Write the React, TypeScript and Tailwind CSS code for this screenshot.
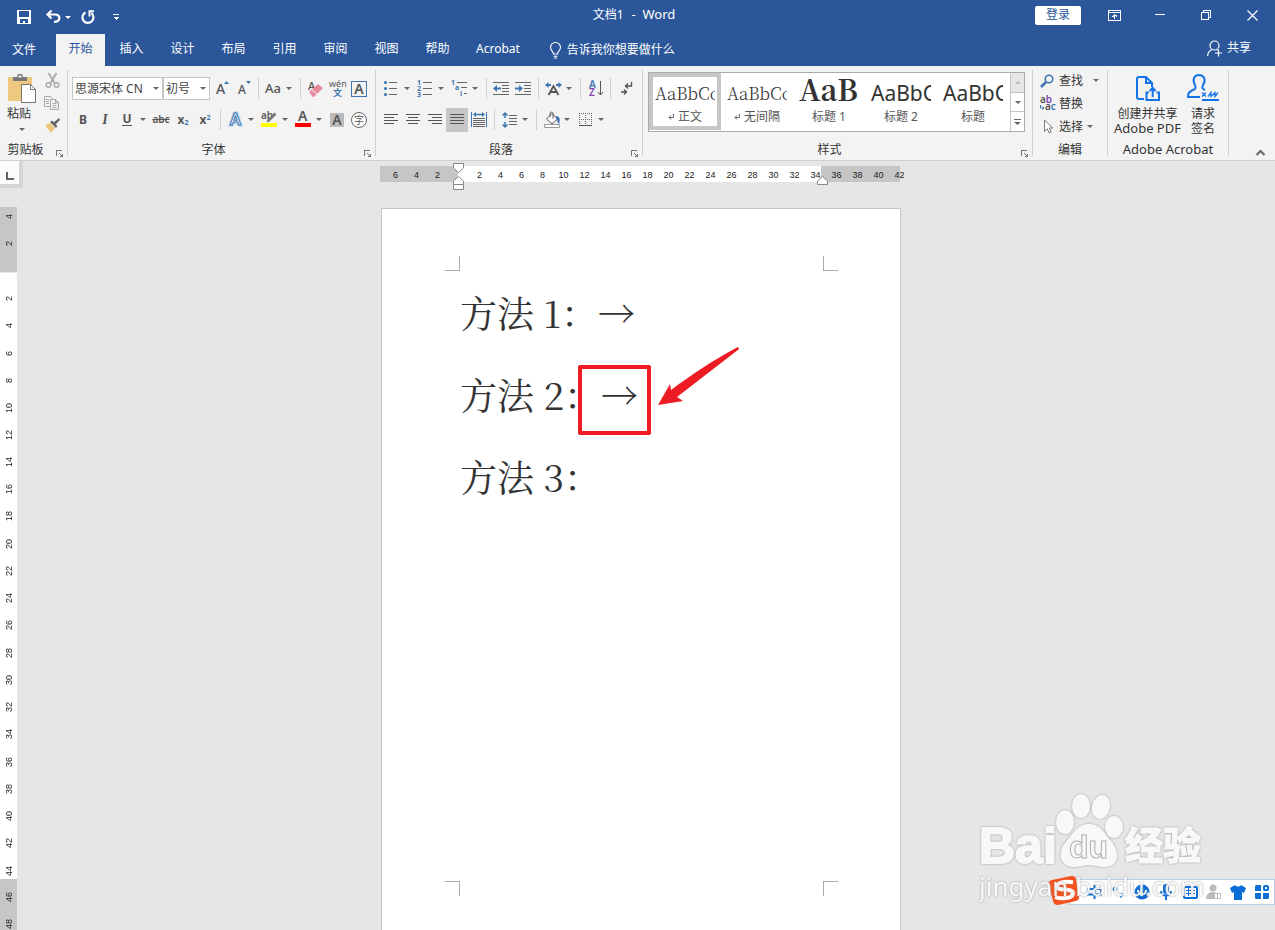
import type { ReactNode } from 'react';

const TABS = ['开始', '插入', '设计', '布局', '引用', '审阅', '视图', '帮助'];

const SERIF = "font-['Noto_Serif_CJK_SC','Liberation_Serif','Noto_Sans_CJK_SC',serif]";

const STYLES = [
  { sample: 'AaBbCc', name: '正文', mark: true, look: `${SERIF} items-center text-[17px] font-light leading-7 text-[#333]` },
  { sample: 'AaBbCc', name: '无间隔', mark: true, look: `${SERIF} items-center text-[17px] font-light leading-7 text-[#333]` },
  { sample: 'AaB', name: '标题 1', mark: false, look: `${SERIF} items-start text-[29px] font-bold leading-6 text-[#333]` },
  { sample: 'AaBbC', name: '标题 2', mark: false, look: 'items-center text-[21px] leading-7 text-[#333]' },
  { sample: 'AaBbC', name: '标题', mark: false, look: 'items-center text-[21px] leading-7 text-[#333]' },
];

const evens = (from: number, to: number) =>
  Array.from({ length: Math.abs(to - from) / 2 + 1 }, (_, i) => from + (to > from ? 2 : -2) * i);

interface IconProps {
  w?: number;
  h?: number;
  crisp?: boolean;
  children: ReactNode;
}

function Icon({ w = 16, h = 16, crisp, children }: IconProps) {
  return (
    <svg
      width={w}
      height={h}
      viewBox={`0 0 ${w} ${h}`}
      fill="none"
      className="shrink-0 overflow-visible"
      shapeRendering={crisp ? 'crispEdges' : undefined}
      aria-hidden="true"
    >
      {children}
    </svg>
  );
}

function Caret({ color = '#666' }: { color?: string }) {
  return (
    <Icon w={6} h={3}>
      <path d="M0 0h6L3 3z" fill={color} />
    </Icon>
  );
}

interface ToolProps {
  label: string;
  split?: boolean;
  active?: boolean;
  children: ReactNode;
}

// One ribbon button; split buttons carry a drop-down caret on the right
function Tool({ label, split, active, children }: ToolProps) {
  return (
    <button
      type="button"
      aria-label={label}
      className={`flex h-6 shrink-0 items-center ${split ? 'w-[34px]' : 'w-[22px]'} ${active ? 'bg-[#c6c6c6]' : ''}`}
    >
      <span className="flex w-[22px] shrink-0 items-center justify-center">{children}</span>
      {split && (
        <span className="flex w-2.5 justify-center">
          <Caret />
        </span>
      )}
    </button>
  );
}

function Divider() {
  return (
    <span className="flex w-2 shrink-0 justify-center">
      <span className="h-[21px] w-px bg-[#d0d0d0]" />
    </span>
  );
}

interface GroupProps {
  title: string;
  width: string;
  launcher?: boolean;
  children: ReactNode;
}

function Group({ title, width, launcher, children }: GroupProps) {
  return (
    <section className={`flex flex-col ${width}`}>
      <div className="h-[74px]">{children}</div>
      <div className="flex h-5 items-center">
        <span className={`flex-1 text-center whitespace-nowrap ${title.startsWith('Adobe') ? 'text-[13px]' : ''}`}>{title}</span>
        {launcher && (
          <button type="button" aria-label={`${title}设置`} className="flex w-4 justify-center pt-1.5">
            <Icon w={7} h={7} crisp>
              <path d="M0.5 6V0.5H6" stroke="#777" />
              <path d="M3 3l3 3" stroke="#777" />
              <path d="M7 3v4H3z" fill="#777" />
            </Icon>
          </button>
        )}
      </div>
    </section>
  );
}

function GroupLine() {
  return <div className="my-1 w-px shrink-0 bg-[#d0d0d0]" />;
}

function Row({ children }: { children: ReactNode }) {
  return <div className="flex h-[31px] items-center">{children}</div>;
}

function Lines({ rows }: { rows: [number, number][] }) {
  return (
    <Icon w={14} h={12} crisp>
      {rows.map(([x, width], i) => (
        <rect key={i} x={x} y={i * 3} width={width} height={1} fill="#555" />
      ))}
    </Icon>
  );
}

function TitleBar() {
  return (
    <header className="grid h-[34px] grid-cols-[1fr_auto_1fr] items-center">
      <div className="flex items-center pl-[17px]">
        <button type="button" aria-label="保存">
          <Icon w={15} h={15} crisp>
            <path d="M0 0h14v14H0z" fill="#fff" />
            <path d="M2 1h10v6H2zM3 9h8v4H8v-2H6v2H3z" fill="#2b579a" />
          </Icon>
        </button>
        <button type="button" aria-label="撤消" className="ml-3.5 flex items-center gap-1">
          <Icon w={15} h={14}>
            <path d="M5.500 0.500L1.500 4.500l4 4M1.500 4.500h7.500c6 0 6 7.300-1 7.300" stroke="#fff" strokeWidth="2.200" />
          </Icon>
          <Caret color="#fff" />
        </button>
        <button type="button" aria-label="重复" className="ml-2.5">
          <Icon w={14} h={15}>
            <path d="M4.500 2.500A5.500 5.500 0 1 0 10.500 3.200" stroke="#fff" strokeWidth="2.200" />
            <path d="M7.500 1.200h5.500M8.500 1v5.500" stroke="#fff" strokeWidth="2" />
          </Icon>
        </button>
        <button type="button" aria-label="自定义快速访问工具栏" className="ml-[18px]">
          <Icon w={6} h={7} crisp>
            <path d="M0 0h6v1H0zM0 3h6L3 6z" fill="#fff" />
          </Icon>
        </button>
      </div>
      <h1 className="flex items-center gap-2 pr-[7px] pb-1 whitespace-pre">
        <span>文档1</span>
        <span className="text-[13px]">-  Word</span>
      </h1>
      <div className="flex h-full items-center justify-end pb-1">
        <button type="button" className="mr-2.5 h-[19px] w-[46px] rounded-xs bg-white text-[#2b579a]">
          登录
        </button>
        <button type="button" aria-label="功能区显示选项" className="flex w-[46px] justify-center">
          <Icon w={13} h={11} crisp>
            <path d="M0.5 0.5h12v10H0.500zM0 2.500h13M6.500 4v5M4 6.500h1v-1h3v1h1" stroke="#fff" />
          </Icon>
        </button>
        <button type="button" aria-label="最小化" className="flex w-[46px] justify-center">
          <Icon w={10} h={2} crisp>
            <path d="M0 0h10v1H0z" fill="#fff" />
          </Icon>
        </button>
        <button type="button" aria-label="还原" className="flex w-[46px] justify-center">
          <Icon w={10} h={10} crisp>
            <path d="M0.500 2.500h7v7h-7zM2.500 2V0.500h7v7H8" stroke="#fff" />
          </Icon>
        </button>
        <button type="button" aria-label="关闭" className="flex w-[46px] justify-center">
          <Icon w={11} h={11}>
            <path d="M0.500 0.500l10 10M10.500 0.500l-10 10" stroke="#fff" strokeWidth="1.200" />
          </Icon>
        </button>
      </div>
    </header>
  );
}

function TabBar() {
  return (
    <nav className="flex h-8 items-stretch">
      <button type="button" className="mr-2 w-12">文件</button>
      <div className="flex gap-0.5">
        {TABS.map((tab, i) => (
          <button key={tab} type="button" className={`w-[49px] pb-0.5 ${i === 0 ? 'bg-[#f3f3f3] text-[#2b579a]' : ''}`}>
            {tab}
          </button>
        ))}
        <button type="button" className="px-3 pb-0.5">Acrobat</button>
      </div>
      <label className="ml-[18px] flex items-center gap-1.5">
        <Icon w={11} h={17}>
          <path d="M3.500 12c0-2.500-3-3.500-3-6.500a5 5 0 0 1 10 0c0 3-3 4-3 6.500zM3.500 14.200h4M4 16h3" stroke="#fff" strokeWidth="1.100" />
        </Icon>
        <input placeholder="告诉我你想要做什么" className="w-32 bg-transparent outline-none placeholder:text-white" />
      </label>
      <button type="button" className="mr-6 ml-auto flex items-center gap-1 pb-1">
        <Icon w={16} h={17}>
          <circle cx="7.500" cy="5.500" r="4.500" stroke="#fff" strokeWidth="1.200" />
          <path d="M0.700 16c0-3.500 2-5.500 4.500-6.500M9.500 9.500l1 0.700M11.500 9.500v7M8 13h7" stroke="#fff" strokeWidth="1.200" />
        </Icon>
        共享
      </button>
    </nav>
  );
}

function ClipboardGroup() {
  return (
    <Group title="剪贴板" width="w-[67px]" launcher>
      <div className="flex gap-2 pt-[7px] pl-[7px]">
        <button type="button" className="flex flex-col items-start">
          <Icon w={29} h={31}>
            <path d="M1 4h24v24H1z" fill="#edc87e" />
            <path d="M6 4h4l1-3h4l1 3h4v4H6z" fill="#777" />
            <path d="M11.500 2.500h3v2h-3z" fill="#f3f3f3" />
            <path d="M14.500 11.500h9l5 5v13h-14z" fill="#fff" stroke="#777" />
            <path d="M23.500 11.500v5h5" stroke="#777" />
          </Icon>
          <span className="leading-5">粘贴</span>
          <span className="pt-1 pl-3"><Caret /></span>
        </button>
        <div className="flex flex-col items-center gap-2">
          <button type="button" aria-label="剪切">
            <Icon w={15} h={15}>
              <path d="M3.500 0l6 10M11.500 0l-6 10" stroke="#aaa" strokeWidth="1.800" />
              <circle cx="3.500" cy="12" r="2.300" stroke="#aaa" strokeWidth="1.500" />
              <circle cx="11.500" cy="12" r="2.300" stroke="#aaa" strokeWidth="1.500" />
            </Icon>
          </button>
          <button type="button" aria-label="复制">
            <Icon w={16} h={14}>
              <path d="M6 10.500H0.500v-10h6l2 2" stroke="#aaa" />
              <path d="M6.500 3.500h5l3 3v7h-8zM11.500 3.500v3h3M2 3.500h3M2 5.500h3M2 7.500h3M8.500 7.500h4M8.500 9.500h4M8.500 11.500h4" stroke="#aaa" />
            </Icon>
          </button>
          <button type="button" aria-label="格式刷">
            <Icon w={16} h={15}>
              <path d="M1 7l5-2 5 5-4 5z" fill="#edc87e" />
              <path d="M6 4l2-1.500L13.500 8 12 10z" fill="#666" />
              <path d="M9 5l6-5 1 2-5 5z" fill="#666" />
            </Icon>
          </button>
        </div>
      </div>
    </Group>
  );
}

interface PickerProps {
  label: string;
  value: string;
  width: string;
}

function Picker({ label, value, width }: PickerProps) {
  return (
    <div className={`relative h-[23px] shrink-0 ${width}`}>
      <select aria-label={label} className="h-full w-full appearance-none border border-[#c6c6c6] bg-white pl-0.5 text-[#444] outline-none">
        <option>{value}</option>
      </select>
      <span className="pointer-events-none absolute top-2.5 right-1">
        <Caret />
      </span>
    </div>
  );
}

function FontGroup() {
  return (
    <Group title="字体" width="w-[307px]" launcher>
      <div className="pt-[7px] pl-1 text-[#555]">
        <Row>
          <Picker label="字体" value="思源宋体 CN" width="w-[91px]" />
          <Picker label="字号" value="初号" width="w-[47px]" />
          <Tool label="增大字号">
            <Icon w={10} h={16}>
              <text x="0" y="13" fontSize="14" fontWeight="500" fill="#555">A</text>
              <path d="M8 3h5L10.500 0z" fill="#3f76b0" />
            </Icon>
          </Tool>
          <Tool label="减小字号">
            <Icon w={10} h={16}>
              <text x="0" y="13" fontSize="12" fontWeight="500" fill="#555">A</text>
              <path d="M8 0h5l-2.500 3z" fill="#3f76b0" />
            </Icon>
          </Tool>
          <Divider />
          <Tool label="更改大小写" split>
            <span className="text-[13px] font-medium">Aa</span>
          </Tool>
          <Divider />
          <Tool label="清除格式">
            <Icon w={14} h={16}>
              <text x="0" y="9" fontSize="11" fontWeight="500" fill="#555">A</text>
              <path d="M1 11L10 3l5 4-9 9H5z" fill="#e58a9b" />
              <path d="M4 9l5 4" stroke="#f3f3f3" />
            </Icon>
          </Tool>
          <Tool label="拼音指南">
            <Icon w={16} h={16}>
              <text x="0" y="6" fontSize="9" fill="#555">wén</text>
              <text x="4" y="15" fontSize="9" fontWeight="700" fill="#3f76b0">文</text>
            </Icon>
          </Tool>
          <Tool label="字符边框">
            <span className="flex size-4 shrink-0 items-center justify-center border border-[#3f76b0] text-sm leading-none font-semibold">A</span>
          </Tool>
        </Row>
        <Row>
          <Tool label="加粗"><b>B</b></Tool>
          <Tool label="倾斜"><i className="font-['Liberation_Serif',serif] text-sm font-bold">I</i></Tool>
          <Tool label="下划线" split><b className="border-b border-[#555] leading-3">U</b></Tool>
          <Tool label="删除线"><span className="text-[10px] font-semibold line-through">abc</span></Tool>
          <Tool label="下标"><b>x<sub className="text-[7px] text-[#3f76b0]">2</sub></b></Tool>
          <Tool label="上标"><b>x<sup className="text-[7px] text-[#3f76b0]">2</sup></b></Tool>
          <Divider />
          <Tool label="文本效果" split>
            <Icon w={15} h={18}>
              <text x="2" y="14" fontSize="16" fontWeight="600" fill="#fff" stroke="#b5d2ee" strokeWidth="3">A</text>
              <text x="2" y="14" fontSize="16" fontWeight="600" fill="#fff" stroke="#3f76b0">A</text>
            </Icon>
          </Tool>
          <Tool label="突出显示" split>
            <Icon w={16} h={17}>
              <text x="0" y="8" fontSize="10" fontWeight="600" fill="#555">ab</text>
              <path d="M13.500 1.500l2 2-7 7-3 1 1-3z" fill="#777" />
              <path d="M0 12h16v4H0z" fill="#ff0" />
            </Icon>
          </Tool>
          <Tool label="字体颜色" split>
            <Icon w={16} h={17}>
              <text x="3" y="10" fontSize="14" fontWeight="600" fill="#555">A</text>
              <path d="M0 12h16v4H0z" fill="#f00" />
            </Icon>
          </Tool>
          <Tool label="字符底纹">
            <span className="flex size-3.5 shrink-0 items-center justify-center bg-[#bbb] text-sm leading-none font-semibold">A</span>
          </Tool>
          <Tool label="带圈字符">
            <span className="flex size-4 shrink-0 items-center justify-center rounded-full border border-[#666] bg-white text-[10px] leading-none">字</span>
          </Tool>
        </Row>
      </div>
    </Group>
  );
}

function ParagraphGroup() {
  return (
    <Group title="段落" width="w-[266px]" launcher>
      <div className="pt-[7px] pl-1">
        <Row>
          <Tool label="项目符号" split>
            <Icon w={14} h={16}>
              {[2, 8, 14].map((y) => (
                <g key={y}>
                  <circle cx="1.500" cy={y - 0.5} r="1.600" fill="#3f76b0" />
                  <path d={`M5 ${y - 0.5}h8`} stroke="#666" />
                </g>
              ))}
            </Icon>
          </Tool>
          <Tool label="编号" split>
            <Icon w={16} h={17}>
              {[1, 2, 3].map((n) => (
                <g key={n}>
                  <text x="0" y={n * 6 - 1} fontSize="7" fontWeight="700" fill="#3f76b0">{n}</text>
                  <path d={`M6 ${n * 6 - 3.500}h9`} stroke="#666" />
                </g>
              ))}
            </Icon>
          </Tool>
          <Tool label="多级列表" split>
            <Icon w={17} h={17}>
              <text x="0" y="5" fontSize="7" fontWeight="700" fill="#3f76b0">1</text>
              <text x="4" y="10" fontSize="7" fontWeight="700" fill="#3f76b0">a</text>
              <text x="9" y="16" fontSize="7" fontWeight="700" fill="#3f76b0">i</text>
              <path d="M6 2.500h10M10 7.500h6M13 13.500h3" stroke="#666" />
            </Icon>
          </Tool>
          <Divider />
          <Tool label="减少缩进">
            <Icon w={16} h={14}>
              <path d="M0 0.500h16M9 3.500h7M9 6.500h7M9 9.500h7M0 12.500h16" stroke="#666" />
              <path d="M0 6.500L4 3v2.500h4v2H4V10z" fill="#3f76b0" />
            </Icon>
          </Tool>
          <Tool label="增加缩进">
            <Icon w={16} h={14}>
              <path d="M0 0.500h16M9 3.500h7M9 6.500h7M9 9.500h7M0 12.500h16" stroke="#666" />
              <path d="M8 6.500L4 3v2.500H0v2h4V10z" fill="#3f76b0" />
            </Icon>
          </Tool>
          <Divider />
          <Tool label="中文版式" split>
            <Icon w={17} h={14}>
              <path d="M3.500 13L8.500 4l5 9M5.500 10h6" stroke="#555" strokeWidth="1.800" />
              <path d="M0 3l3.500-3v2H6v2H3.500v2zM17 3l-3.500-3v2H11v2h2.500v2z" fill="#3f76b0" />
            </Icon>
          </Tool>
          <Divider />
          <Tool label="排序">
            <Icon w={12} h={17}>
              <text x="0" y="8" fontSize="10" fontWeight="600" fill="#3f76b0">A</text>
              <text x="0" y="16" fontSize="10" fontWeight="600" fill="#8246af">Z</text>
              <path d="M11.500 1v14M9 12l2.500 3 2.500-3" stroke="#555" />
            </Icon>
          </Tool>
          <Divider />
          <Tool label="显示编辑标记">
            <Icon w={8} h={13}>
              <path d="M10.500 0v4H4M7 1.500L4.500 4 7 6.500M0 10h5.500M3 7.500L5.500 10 3 12.500" stroke="#555" strokeWidth="1.300" />
            </Icon>
          </Tool>
        </Row>
        <Row>
          <Tool label="左对齐"><Lines rows={[[0, 14], [0, 10], [0, 14], [0, 10]]} /></Tool>
          <Tool label="居中"><Lines rows={[[0, 14], [2, 10], [0, 14], [2, 10]]} /></Tool>
          <Tool label="右对齐"><Lines rows={[[0, 14], [4, 10], [0, 14], [4, 10]]} /></Tool>
          <Tool label="两端对齐" active><Lines rows={[[0, 14], [0, 14], [0, 14], [0, 14]]} /></Tool>
          <Tool label="分散对齐">
            <Icon w={16} h={16}>
              <path d="M0.500 0v15M15.500 0v15" stroke="#3f76b0" />
              <path d="M2 2.500L5 0v1.700h6V0l3 2.500L11 5V3.300H5V5z" fill="#3f76b0" />
              <path d="M2 6.500h12M2 8.500h12M2 10.500h12M2 12.500h12M2 14.500h12" stroke="#666" />
            </Icon>
          </Tool>
          <Divider />
          <Tool label="行和段落间距" split>
            <Icon w={15} h={16}>
              <path d="M3 1v5M3 10v5M0.500 3.500L3 1l2.500 2.500M0.500 12.500L3 15l2.500-2.500" stroke="#3f76b0" strokeWidth="1.500" />
              <path d="M7 3.500h8M7 6.500h8M7 9.500h8M7 12.500h8" stroke="#666" />
            </Icon>
          </Tool>
          <Divider />
          <Tool label="底纹" split>
            <Icon w={15} h={16}>
              <path d="M2.500 7L8 1.500 13.500 7 8 12z" fill="#fff" stroke="#555" />
              <path d="M6 5V2c0-2.500 3-2.500 3 0v4.500" stroke="#555" />
              <path d="M12 4c4 0 4.500 4 3 8-2-1-1-4-3-5z" fill="#3f76b0" />
              <path d="M0.500 12.500h15v3h-15z" fill="#fff" stroke="#999" />
            </Icon>
          </Tool>
          <Tool label="边框" split>
            <Icon w={13} h={14} crisp>
              <path d="M0 0.500h13M0 6.500h13M0.500 0v12M6.500 0v12M12.500 0v12" stroke="#666" strokeDasharray="1 1" />
              <path d="M0 12.500h13" stroke="#555" />
            </Icon>
          </Tool>
        </Row>
      </div>
    </Group>
  );
}

function StylesGroup() {
  return (
    <Group title="样式" width="min-w-0 flex-1" launcher>
      <div className="pt-1.5 pr-[7px] pl-[5px]">
        <div className="flex h-[60px] border border-[#ababab] bg-white">
          <div className="flex flex-1 overflow-hidden">
            {STYLES.map((style, i) => (
              <button
                key={style.name}
                type="button"
                className={`flex h-[57px] w-[72px] shrink-0 flex-col items-center border-4 ${i === 0 ? 'border-[#c6c6c6]' : 'border-transparent'}`}
              >
                <span className={`flex h-8 w-[60px] overflow-hidden ${style.look}`}>
                  {style.sample}
                </span>
                <span className="flex items-center gap-1 leading-4 text-[#555]">
                  {style.mark && (
                    <Icon w={6} h={6}>
                      <path d="M5.500 0v3.500H1M3 1.500l-2 2 2 2" stroke="#666" />
                    </Icon>
                  )}
                  {style.name}
                </span>
              </button>
            ))}
          </div>
          <div className="flex w-3.5 flex-col divide-y divide-[#c6c6c6] border-l border-[#c6c6c6]">
            <button type="button" aria-label="上一行" className="flex flex-1 items-center justify-center bg-[#e6e6e6]">
              <Icon w={6} h={3}><path d="M0 3h6L3 0z" fill="#bbb" /></Icon>
            </button>
            <button type="button" aria-label="下一行" className="flex flex-1 items-center justify-center">
              <Caret />
            </button>
            <button type="button" aria-label="其他" className="flex flex-1 items-center justify-center">
              <Icon w={7} h={6}><path d="M0 0h7v1H0zM0 3h7L3.500 6z" fill="#666" /></Icon>
            </button>
          </div>
        </div>
      </div>
    </Group>
  );
}

function EditGroup() {
  return (
    <Group title="编辑" width="w-[74px]">
      <div className="flex flex-col pt-[3px] pl-[7px]">
        <button type="button" className="flex h-[23px] items-center gap-1">
          <Icon w={15} h={14}>
            <circle cx="9" cy="5" r="3.800" stroke="#3f76b0" strokeWidth="1.600" />
            <path d="M6 8L1 13" stroke="#3f76b0" strokeWidth="2.500" />
          </Icon>
          查找
          <span className="pl-1.5"><Caret /></span>
        </button>
        <button type="button" className="flex h-[23px] items-center gap-1">
          <Icon w={15} h={16}>
            <text x="0" y="7" fontSize="10" fontWeight="600" fill="#555">a<tspan fill="#8246af">b</tspan></text>
            <text x="5" y="14" fontSize="10" fontWeight="600" fill="#555">a<tspan fill="#3f76b0">c</tspan></text>
            <path d="M0.500 9v3h3.500M2.500 10.500L4 12l-1.500 1.500" stroke="#3f76b0" />
          </Icon>
          替换
        </button>
        <button type="button" className="flex h-[23px] items-center gap-1">
          <Icon w={15} h={15}>
            <path d="M4.500 1v11.500l2.800-2.700 1.900 4.200 2-1-1.900-4h3.500z" fill="#fff" stroke="#777" />
          </Icon>
          选择
          <Caret />
        </button>
      </div>
    </Group>
  );
}

function AcrobatGroup() {
  return (
    <Group title="Adobe Acrobat" width="w-[120px]">
      <div className="flex gap-1.5 pt-[7px] pl-1.5 leading-[15px]">
        <button type="button" className="flex flex-col items-center gap-0.5 whitespace-nowrap">
          <Icon w={22} h={31}>
            <path d="M8 26H3a2 2 0 0 1-2-2V6a2 2 0 0 1 2-2h7l6 6v4M10 4v6h6" stroke="#1473e6" strokeWidth="2" />
            <path d="M13 19.500h-2.500V27H23v-7.500h-2.500M16.700 24v-9M13.700 18l3-3 3 3" stroke="#1473e6" strokeWidth="2" />
          </Icon>
          <span>创建并共享</span>
          <span className="-mt-0.5 text-[13px]">Adobe PDF</span>
        </button>
        <button type="button" className="flex flex-col items-center gap-0.5">
          <Icon w={32} h={31}>
            <path d="M13 24H1c-0.500-4 2-6 6-7.500 2-1 2-2 1-4.500-3-5-1-10 4-10s7.500 5 4 10c-1 2.500-1 4 2 5" stroke="#1473e6" strokeWidth="2" />
            <path d="M15 27h17" stroke="#1473e6" strokeWidth="2" />
            <path d="M15 19.500l4 4M19 19.500l-4 4M21 23.500l3-4v4l4-4v4l3-4" stroke="#1473e6" strokeWidth="1.300" />
          </Icon>
          <span>请求<br />签名</span>
        </button>
      </div>
    </Group>
  );
}

function Ribbon() {
  return (
    <div className="flex h-[95px] shrink-0 border-b border-[#d0d0d0] bg-[#f3f3f3] text-[#333]">
      <ClipboardGroup />
      <GroupLine />
      <FontGroup />
      <GroupLine />
      <ParagraphGroup />
      <GroupLine />
      <StylesGroup />
      <GroupLine />
      <EditGroup />
      <GroupLine />
      <AcrobatGroup />
      <GroupLine />
      <div className="flex w-[46px] items-end justify-end pr-2.5 pb-1">
        <button type="button" aria-label="折叠功能区">
          <Icon w={9} h={6}>
            <path d="M0.500 5l4-4 4 4" stroke="#666" strokeWidth="2" />
          </Icon>
        </button>
      </div>
    </div>
  );
}

function Ticks({ values }: { values: number[] }) {
  return values.map((n) => (
    <span key={n} className="w-[21px] shrink-0 text-center">{n}</span>
  ));
}

function HorizontalRuler() {
  return (
    <div className="flex h-[46px] shrink-0 items-start pr-[18px]">
      <button type="button" aria-label="制表符" className="h-[27px] w-[23px] border-r-4 border-b-4 border-[#d5d5d5] bg-[#fcfcfc] pt-1.5 pl-1.5">
        <Icon w={8} h={8} crisp><path d="M0 0h2v6h6v2H0z" fill="#666" /></Icon>
      </button>
      <div className="flex flex-1 justify-center">
        <div className="relative mt-[5px] flex h-4 w-[520px] items-center font-['Liberation_Sans',sans-serif] text-[9px] text-[#222]">
          <div className="flex h-full w-[78px] items-center bg-[#c6c6c6] pt-0.5 pl-[5px]">
            <Ticks values={[6, 4, 2]} />
          </div>
          <div className="flex h-full w-[363px] items-center bg-white pt-0.5 pl-[11px]">
            <Ticks values={evens(2, 34)} />
          </div>
          <div className="flex h-full w-[79px] items-center bg-[#c6c6c6] pt-0.5 pl-[5px]">
            <Ticks values={evens(36, 42)} />
          </div>
          <span className="absolute -top-[3px] left-[73px]">
            <Icon w={11} h={28}>
              <path d="M0.500 0.500h10v4.500l-5 4.500-5-4.500zM5.500 13.500l5 4.500v3.500h-10V18zM0.500 21.500h10v5h-10z" fill="#fff" stroke="#888" />
            </Icon>
          </span>
          <span className="absolute top-2.5 left-[437px]">
            <Icon w={11} h={10}>
              <path d="M5.500 0.500l5 4.500v3.500h-10V5z" fill="#fff" stroke="#888" />
            </Icon>
          </span>
        </div>
      </div>
    </div>
  );
}

function VerticalTick({ n }: { n: number }) {
  return (
    <span className="flex flex-1 items-center justify-center pl-0.5">
      <span className="rotate-180 [writing-mode:vertical-rl]">{n}</span>
    </span>
  );
}

function VerticalRuler() {
  return (
    <div className="flex w-[17px] shrink-0 flex-col overflow-hidden font-['Liberation_Sans',sans-serif] text-[9px] leading-[9px] text-[#222]">
      <div className="h-[65px] shrink-0 bg-[#c6c6c6]">
        <div className="-mt-1 flex h-[54px] flex-col">
          {[4, 2].map((n) => <VerticalTick key={n} n={n} />)}
        </div>
      </div>
      <div className="h-[607px] shrink-0 border-t border-[#e6e6e6] bg-white pt-3">
        <div className="flex h-[599px] flex-col">
          {evens(2, 44).map((n) => <VerticalTick key={n} n={n} />)}
        </div>
      </div>
      <div className="flex-1 bg-[#c6c6c6] pt-[5px]">
        <div className="flex h-[54px] flex-col">
          {[46, 48].map((n) => <VerticalTick key={n} n={n} />)}
        </div>
      </div>
    </div>
  );
}

function Page() {
  return (
    <article className="mt-px flex w-[520px] flex-col border border-b-0 border-[#c6c6c6] bg-white pt-[47px] pr-[62px] pl-[63px]">
      <div className="flex justify-between">
        <span className="size-[15px] border-r border-b border-[#aaa]" />
        <span className="size-[15px] border-b border-l border-[#aaa]" />
      </div>
      <div className={`h-[610px] px-[15px] text-[37px] leading-[82px] whitespace-nowrap text-[#333] ${SERIF}`}>
        <p>方法 1：→</p>
        <p className="relative">
          方法 2：→
          <span className="absolute top-3 left-[118px] h-[70px] w-[73px] rounded-xs border-4 border-[#ed1c24]" />
          <span className="absolute -top-2 left-[197px]">
            <Icon w={84} h={62}>
              <path d="M1 60L13 39l1 6C34 30 58 14 80 2.500c1.500-.6 2.500.8 1.500 2L20 52l6 4z" fill="#ed1c24" />
            </Icon>
          </span>
        </p>
        <p>方法 3：</p>
      </div>
      <div className="flex justify-between">
        <span className="size-[15px] border-t border-r border-[#aaa]" />
        <span className="size-[15px] border-t border-l border-[#aaa]" />
      </div>
    </article>
  );
}

function ImeBar() {
  return (
    <div className="absolute right-0 bottom-[25px] flex h-[26px] items-center border border-[#b5cdea] bg-white pl-3 text-[#0a6cd6]">
      <span className="absolute -top-1 -left-[22px]">
        <Icon w={34} h={30}>
          <path d="M1 9C0 6 1 5 4 4L23 0c3 0 4 0 5 3l3 17c0 3 0 4-3 5L10 29c-3 0-4-1-5-4z" fill="#f4511e" />
          <path d="M25 6.500C18 5 9 6 9 10.500c0 5 16 1 16 7 0 5-12 6-18 3.500" stroke="#fff" strokeWidth="4" />
        </Icon>
      </span>
      <div className="flex items-center">
        <span className="flex w-6 justify-center">
          <Icon w={15} h={14}>
            <path d="M1 4h13v5.500H1zM7.500 0v14" stroke="#0a6cd6" strokeWidth="2" />
          </Icon>
        </span>
        <span className="flex w-6 justify-center">
          <Icon w={12} h={12}>
            <circle cx="3" cy="3" r="1.700" stroke="#0a6cd6" strokeWidth="1.300" />
            <path d="M9 7h2v2l-2 3H8l1-3z" fill="#0a6cd6" />
          </Icon>
        </span>
        <span className="flex w-6 justify-center">
          <Icon>
            <circle cx="8" cy="8" r="7.500" fill="#0a6cd6" />
            <path d="M4 6c0 6 8 6 8 0" stroke="#fff" strokeWidth="2" />
          </Icon>
        </span>
        <span className="flex w-6 justify-center">
          <Icon w={12} h={16}>
            <rect x="3" y="0" width="6" height="10" rx="3" fill="#0a6cd6" />
            <path d="M1 7c0 6 10 6 10 0M6 12v4" stroke="#0a6cd6" strokeWidth="2" />
          </Icon>
        </span>
        <span className="flex w-6 justify-center">
          <Icon w={15} h={13}>
            <rect x="1" y="1" width="13" height="11" rx="1" stroke="#0a6cd6" strokeWidth="2" />
            <path d="M3 4.500h9M3 7.500h9M5.500 2v8M9.500 2v8" stroke="#0a6cd6" />
          </Icon>
        </span>
        <span className="flex w-6 justify-center">
          <Icon>
            <circle cx="7" cy="4" r="3.500" fill="#bbb" />
            <path d="M0 15c0-8 9-8 10-6v6z" fill="#bbb" />
            <path d="M8.500 9.500h6v5h-6zM11.500 10v5" fill="#fff" stroke="#bbb" />
          </Icon>
        </span>
        <span className="flex w-6 justify-center">
          <Icon w={16} h={15}>
            <path d="M0 3l5-3c1 2 5 2 6 0l5 3-2 5-2-1v8H4V7L2 8z" fill="#0a6cd6" />
          </Icon>
        </span>
        <span className="flex w-6 justify-center">
          <Icon w={14} h={14}>
            <path d="M0 1.500Q0 0 1.500 0H6v6H0zM0 8h6v6H1.500Q0 14 0 12.500zM8 8h6v4.500q0 1.500-1.500 1.500H8z" fill="#0a6cd6" />
            <rect x="9" y="1" width="4" height="4" rx="1" stroke="#0a6cd6" strokeWidth="2" />
          </Icon>
        </span>
      </div>
    </div>
  );
}

function Watermark() {
  return (
    <div className="pointer-events-none absolute right-[60px] bottom-5">
      <svg
        width="236"
        height="120"
        viewBox="0 0 236 120"
        fill="#fafafa"
        className="font-['Noto_Sans','Noto_Sans_CJK_SC',sans-serif] drop-shadow-[0_0_1px_#999]"
        opacity="0.900"
      >
        <text x="0" y="73" fontSize="50" fontWeight="700" stroke="#fafafa" strokeWidth="2" fontFamily="Liberation Sans">Bai</text>
        <ellipse cx="86" cy="32" rx="9" ry="12" />
        <ellipse cx="102" cy="16" rx="9" ry="12" />
        <ellipse cx="122" cy="17" rx="9" ry="12" transform="rotate(12 122 17)" />
        <ellipse cx="135" cy="37" rx="9" ry="11" />
        <path d="M110 34c12 0 16 10 22 17 8 9 10 25-6 26-8 0-10-2-16-2s-8 2-16 2c-13-1-16-14-8-24 8-9 12-19 24-19z" />
        <text x="90" y="68" fontSize="32" fontWeight="700" stroke="#aaa" fontFamily="Liberation Sans">du</text>
        <text x="146" y="69" fontSize="38" fontWeight="900" stroke="#fafafa">经验</text>
        <text x="0" y="106" fontSize="26">jingyan.baidu.com</text>
      </svg>
    </div>
  );
}

export default function App() {
  return (
    <div className="relative flex h-screen flex-col overflow-hidden bg-[#e6e6e6] font-['Noto_Sans','Noto_Sans_CJK_SC',sans-serif] text-xs">
      <div className="shrink-0 bg-[#2b579a] text-white">
        <TitleBar />
        <TabBar />
      </div>
      <Ribbon />
      <HorizontalRuler />
      <main className="flex min-h-0 flex-1">
        <VerticalRuler />
        <div className="flex flex-1 justify-center pr-2.5">
          <Page />
        </div>
      </main>
      <ImeBar />
      <Watermark />
    </div>
  );
}
